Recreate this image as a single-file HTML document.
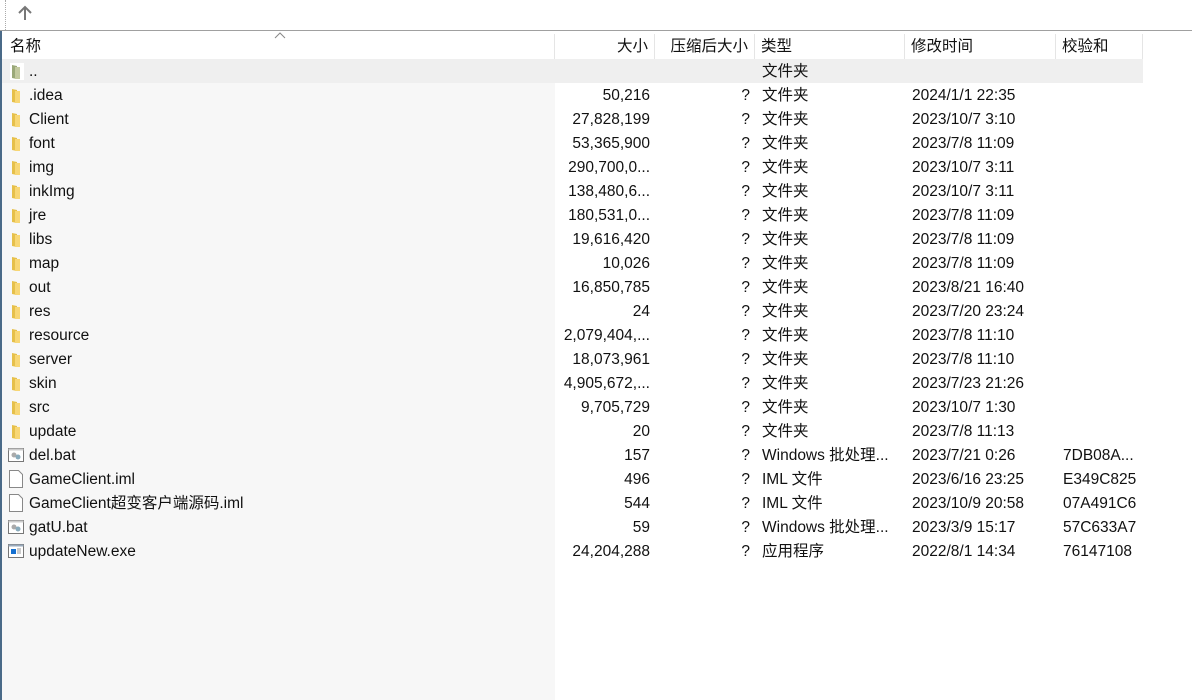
<!DOCTYPE html>
<html><head><meta charset="utf-8"><style>
*{margin:0;padding:0;box-sizing:border-box}
body{width:1192px;height:700px;background:#fff;position:relative;overflow:hidden;font-family:"Liberation Sans","Noto Sans CJK SC",sans-serif;font-size:15.5px;color:#111}
.tb{position:absolute;left:0;top:0;width:1192px;height:31px;border-bottom:1px solid #a0a0a0;background:#fff}
.dots{position:absolute;left:5px;top:0;height:30px;border-left:1px dotted #aaa}
.namebg{position:absolute;left:2px;top:59px;width:553px;height:641px;background:#f7f7f7}
.edge{position:absolute;left:0;top:31px;width:2px;height:669px;background:#4a6a88}
.hd{position:absolute;top:34px;height:25px;line-height:26px;border-right:1px solid #e5e5e5;padding:0 6px}
.r{position:absolute;left:2px;width:1141px;height:24px;line-height:26px}
.r span{position:absolute;top:0;white-space:nowrap}
.n{left:27px}.s{right:493px}.p{right:393px}.t{left:760px}.d{left:910px}.c{left:1061px}
.ic{position:absolute;left:8px;top:4px}
</style></head><body>
<div class="tb"><div class="dots"></div>
<svg style="position:absolute;left:17px;top:4px" width="16" height="18" viewBox="0 0 16 18"><path d="M8 16V3M2 9l6-6 6 6" stroke="#777" stroke-width="2" fill="none"/></svg></div>
<div class="edge"></div>
<div class="namebg"></div>
<svg style="position:absolute;left:274px;top:32px" width="12" height="8"><path d="M1 6l5-5 5 5" stroke="#888" fill="none"/></svg>
<div class="hd" style="left:4px;width:551px">名称</div>
<div class="hd" style="left:555px;width:100px;text-align:right">大小</div>
<div class="hd" style="left:655px;width:100px;text-align:right">压缩后大小</div>
<div class="hd" style="left:755px;width:150px">类型</div>
<div class="hd" style="left:905px;width:151px">修改时间</div>
<div class="hd" style="left:1056px;width:87px">校验和</div>
<div class="r" style="top:59px;background:#efefef"><svg class="ic" width="14" height="17"><rect x="0" y="0" width="14" height="17" fill="#fff"/><path d="M2 2l5 1v13l-5-1z" fill="#9aa878"/><path d="M5 4h5v12H5z" fill="#c2c99f"/></svg><span class="n">..</span><span class="t">文件夹</span></div>
<div id="rows"></div>
<script>
var F=[[".idea","50,216","2024/1/1 22:35"],["Client","27,828,199","2023/10/7 3:10"],["font","53,365,900","2023/7/8 11:09"],["img","290,700,0...","2023/10/7 3:11"],["inkImg","138,480,6...","2023/10/7 3:11"],["jre","180,531,0...","2023/7/8 11:09"],["libs","19,616,420","2023/7/8 11:09"],["map","10,026","2023/7/8 11:09"],["out","16,850,785","2023/8/21 16:40"],["res","24","2023/7/20 23:24"],["resource","2,079,404,...","2023/7/8 11:10"],["server","18,073,961","2023/7/8 11:10"],["skin","4,905,672,...","2023/7/23 21:26"],["src","9,705,729","2023/10/7 1:30"],["update","20","2023/7/8 11:13"]];
var G=[["del.bat","157","Windows 批处理...","2023/7/21 0:26","7DB08A...","b"],["GameClient.iml","496","IML 文件","2023/6/16 23:25","E349C825","f"],["GameClient超变客户端源码.iml","544","IML 文件","2023/10/9 20:58","07A491C6","f"],["gatU.bat","59","Windows 批处理...","2023/3/9 15:17","57C633A7","b"],["updateNew.exe","24,204,288","应用程序","2022/8/1 14:34","76147108","e"]];
var h="",y=83;
var fold='<svg class="ic" width="14" height="17"><path d="M2 2l5 1v13l-5-1z" fill="#e6c04a"/><path d="M5 4h5v12H5z" fill="#f8d775"/></svg>';
var ico={b:'<svg class="ic" style="left:6px;top:4px" width="16" height="16"><rect x=".5" y="1.5" width="15" height="13" fill="#fff" stroke="#777"/><rect x=".5" y="1.5" width="15" height="2" fill="#ccc"/><circle cx="6" cy="8" r="2.5" fill="#aaa"/><circle cx="10" cy="10" r="2.5" fill="#8ab"/></svg>',
f:'<svg class="ic" style="left:7px;top:3px" width="14" height="18"><path d="M.5 .5h9l4 4v13H.5z" fill="#fff" stroke="#888"/></svg>',
e:'<svg class="ic" style="left:6px;top:4px" width="16" height="16"><rect x=".5" y="1.5" width="15" height="13" fill="#fff" stroke="#777"/><rect x=".5" y="1.5" width="15" height="2" fill="#9ab"/><rect x="3" y="6" width="5" height="5" fill="#1570d0"/><path d="M9 6h4M9 8h4M9 10h4" stroke="#999"/></svg>'};
F.forEach(function(r){h+='<div class="r" style="top:'+y+'px">'+fold+'<span class="n">'+r[0]+'</span><span class="s">'+r[1]+'</span><span class="p">?</span><span class="t">文件夹</span><span class="d">'+r[2]+'</span></div>';y+=24;});
G.forEach(function(r){h+='<div class="r" style="top:'+y+'px">'+ico[r[5]]+'<span class="n">'+r[0]+'</span><span class="s">'+r[1]+'</span><span class="p">?</span><span class="t">'+r[2]+'</span><span class="d">'+r[3]+'</span><span class="c">'+r[4]+'</span></div>';y+=24;});
document.getElementById("rows").innerHTML=h;
</script>
</body></html>
